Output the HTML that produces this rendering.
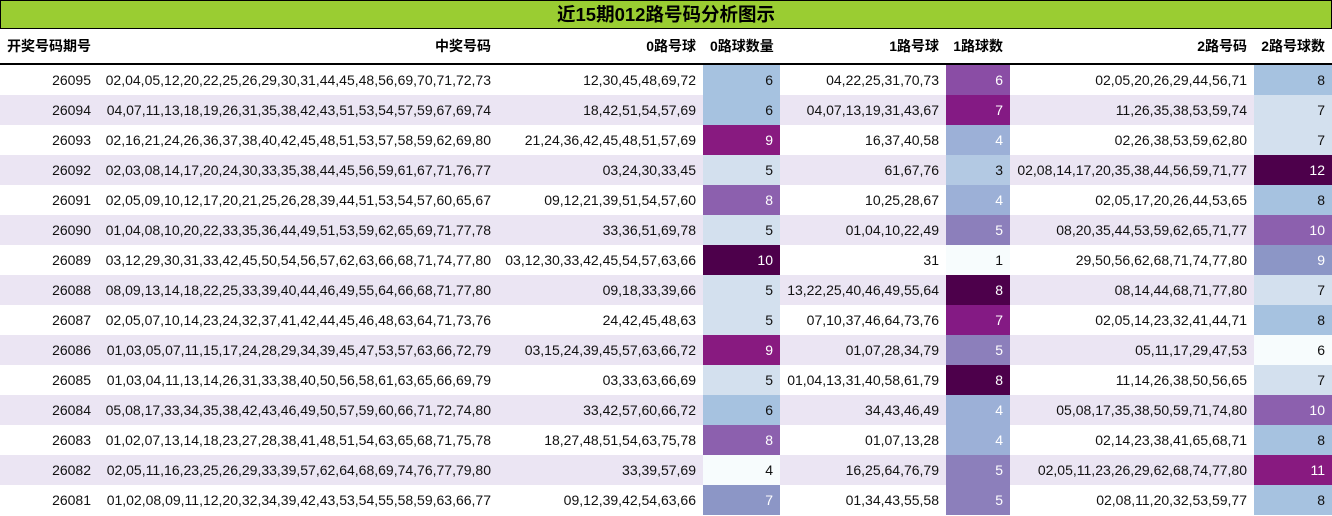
<!DOCTYPE html><html><head><meta charset="utf-8"><style>
body{margin:0;width:1332px;height:516px;overflow:hidden;background:#fff;font-family:"Liberation Sans","Noto Sans CJK SC",sans-serif;}
.t{position:absolute;left:0;top:0;width:1330px;height:27px;background:#9acd32;border:1px solid #000;text-align:center;font-size:18.5px;font-weight:bold;line-height:28px;}
table{position:absolute;left:0;top:29px;border-collapse:collapse;font-size:14px;table-layout:fixed;width:1332px}
th{height:34px;text-align:right;padding:0 7px;font-weight:bold;border-bottom:2px solid #000;white-space:nowrap}
td{height:30px;text-align:right;padding:0 7px;white-space:nowrap;color:#111}
#b tr:nth-child(even) td{background:#ebe5f3}
td.w{color:#fff}
</style></head><body>
<div class="t">近15期012路号码分析图示</div>
<table>
<colgroup><col style="width:98px"><col style="width:400px"><col style="width:205px"><col style="width:77px"><col style="width:166px"><col style="width:64px"><col style="width:244px"><col style="width:78px"></colgroup>
<thead><tr><th>开奖号码期号</th><th>中奖号码</th><th>0路号球</th><th>0路球数量</th><th>1路号球</th><th>1路球数</th><th>2路号码</th><th>2路号球数</th></tr></thead>
<tbody id="b"></tbody>
</table>
<script>
var d=[["26095","02,04,05,12,20,22,25,26,29,30,31,44,45,48,56,69,70,71,72,73","12,30,45,48,69,72",6,"04,22,25,31,70,73",6,"02,05,20,26,29,44,56,71",8],
["26094","04,07,11,13,18,19,26,31,35,38,42,43,51,53,54,57,59,67,69,74","18,42,51,54,57,69",6,"04,07,13,19,31,43,67",7,"11,26,35,38,53,59,74",7],
["26093","02,16,21,24,26,36,37,38,40,42,45,48,51,53,57,58,59,62,69,80","21,24,36,42,45,48,51,57,69",9,"16,37,40,58",4,"02,26,38,53,59,62,80",7],
["26092","02,03,08,14,17,20,24,30,33,35,38,44,45,56,59,61,67,71,76,77","03,24,30,33,45",5,"61,67,76",3,"02,08,14,17,20,35,38,44,56,59,71,77",12],
["26091","02,05,09,10,12,17,20,21,25,26,28,39,44,51,53,54,57,60,65,67","09,12,21,39,51,54,57,60",8,"10,25,28,67",4,"02,05,17,20,26,44,53,65",8],
["26090","01,04,08,10,20,22,33,35,36,44,49,51,53,59,62,65,69,71,77,78","33,36,51,69,78",5,"01,04,10,22,49",5,"08,20,35,44,53,59,62,65,71,77",10],
["26089","03,12,29,30,31,33,42,45,50,54,56,57,62,63,66,68,71,74,77,80","03,12,30,33,42,45,54,57,63,66",10,"31",1,"29,50,56,62,68,71,74,77,80",9],
["26088","08,09,13,14,18,22,25,33,39,40,44,46,49,55,64,66,68,71,77,80","09,18,33,39,66",5,"13,22,25,40,46,49,55,64",8,"08,14,44,68,71,77,80",7],
["26087","02,05,07,10,14,23,24,32,37,41,42,44,45,46,48,63,64,71,73,76","24,42,45,48,63",5,"07,10,37,46,64,73,76",7,"02,05,14,23,32,41,44,71",8],
["26086","01,03,05,07,11,15,17,24,28,29,34,39,45,47,53,57,63,66,72,79","03,15,24,39,45,57,63,66,72",9,"01,07,28,34,79",5,"05,11,17,29,47,53",6],
["26085","01,03,04,11,13,14,26,31,33,38,40,50,56,58,61,63,65,66,69,79","03,33,63,66,69",5,"01,04,13,31,40,58,61,79",8,"11,14,26,38,50,56,65",7],
["26084","05,08,17,33,34,35,38,42,43,46,49,50,57,59,60,66,71,72,74,80","33,42,57,60,66,72",6,"34,43,46,49",4,"05,08,17,35,38,50,59,71,74,80",10],
["26083","01,02,07,13,14,18,23,27,28,38,41,48,51,54,63,65,68,71,75,78","18,27,48,51,54,63,75,78",8,"01,07,13,28",4,"02,14,23,38,41,65,68,71",8],
["26082","02,05,11,16,23,25,26,29,33,39,57,62,64,68,69,74,76,77,79,80","33,39,57,69",4,"16,25,64,76,79",5,"02,05,11,23,26,29,62,68,74,77,80",11],
["26081","01,02,08,09,11,12,20,32,34,39,42,43,53,54,55,58,59,63,66,77","09,12,39,42,54,63,66",7,"01,34,43,55,58",5,"02,08,11,20,32,53,59,77",8]];
var c0={4:"#f7fcfd",5:"#d3e0ee",6:"#a6c2e0",7:"#8c96c6",8:"#8c60ae",9:"#881a80",10:"#4d004b"};
var c1={1:"#f7fcfd",3:"#b3c9e3",4:"#9cb0d7",5:"#8c7fbb",6:"#8a4da5",7:"#841a84",8:"#4d004b"};
var c2={6:"#f7fcfd",7:"#d3e0ee",8:"#a6c2e0",9:"#8c96c6",10:"#8c60ae",11:"#881a80",12:"#4d004b"};
function cell(v,m,dk){return '<td class="'+(v>=dk?'w':'')+'" style="background:'+m[v]+'">'+v+'</td>';}
var h="";d.forEach(function(r){h+="<tr><td>"+r[0]+"</td><td>"+r[1]+"</td><td>"+r[2]+"</td>"+cell(r[3],c0,7)+"<td>"+r[4]+"</td>"+cell(r[5],c1,4)+"<td>"+r[6]+"</td>"+cell(r[7],c2,9)+"</tr>";});
document.getElementById("b").innerHTML=h;
</script>
</body></html>
